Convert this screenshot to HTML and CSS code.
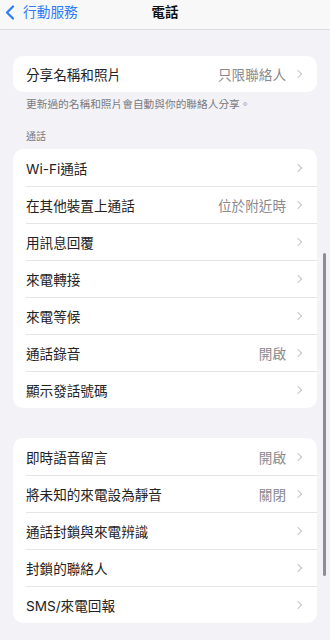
FILE: index.html
```html
<!DOCTYPE html>
<html lang="zh-Hant">
<head>
<meta charset="utf-8">
<title>電話</title>
<link rel="stylesheet" href="styles.css">
</head>
<body>
<div class="screen">
  <header class="nav">
    <div class="back">
      <svg class="back-icon" width="10" height="15" viewBox="0 0 10 15"><path d="M8 1.5 L2 7.5 L8 13.5" fill="none" stroke="#2f7cf6" stroke-width="2.2" stroke-linecap="round" stroke-linejoin="round"/></svg>
      <span>行動服務</span>
    </div>
    <div class="title">電話</div>
  </header>

  <main class="content">
    <section class="card first">
      <div class="row"><span class="label">分享名稱和照片</span><span class="value">只限聯絡人</span><span class="chev"></span></div>
    </section>
    <p class="footnote">更新過的名稱和照片會自動與你的聯絡人分享。</p>

    <h2 class="section-title">通話</h2>
    <section class="card">
      <div class="row"><span class="label">Wi-Fi通話</span><span class="value"></span><span class="chev"></span></div>
      <div class="row"><span class="label">在其他裝置上通話</span><span class="value">位於附近時</span><span class="chev"></span></div>
      <div class="row"><span class="label">用訊息回覆</span><span class="value"></span><span class="chev"></span></div>
      <div class="row"><span class="label">來電轉接</span><span class="value"></span><span class="chev"></span></div>
      <div class="row"><span class="label">來電等候</span><span class="value"></span><span class="chev"></span></div>
      <div class="row"><span class="label">通話錄音</span><span class="value">開啟</span><span class="chev"></span></div>
      <div class="row"><span class="label">顯示發話號碼</span><span class="value"></span><span class="chev"></span></div>
    </section>

    <section class="card gap">
      <div class="row"><span class="label">即時語音留言</span><span class="value">開啟</span><span class="chev"></span></div>
      <div class="row"><span class="label">將未知的來電設為靜音</span><span class="value">關閉</span><span class="chev"></span></div>
      <div class="row"><span class="label">通話封鎖與來電辨識</span><span class="value"></span><span class="chev"></span></div>
      <div class="row"><span class="label">封鎖的聯絡人</span><span class="value"></span><span class="chev"></span></div>
      <div class="row"><span class="label">SMS/來電回報</span><span class="value"></span><span class="chev"></span></div>
    </section>
  </main>
  <div class="scrollbar"></div>
</div>
</body>
</html>
```

FILE: styles.css
```css
* { box-sizing: border-box; }
html, body {
  margin: 0;
  padding: 0;
  background: #f2f2f7;
}
body {
  font-family: "Inter", "Noto Sans CJK TC", "Noto Sans", sans-serif;
  color: #1c1c1e;
}
.screen {
  position: relative;
  width: 330px;
  height: 640px;
  overflow: hidden;
  background: #f2f2f7;
}
.nav {
  position: relative;
  height: 30px;
  background: #f8f8f8;
  border-bottom: 1px solid #dcdcdf;
  display: flex;
  align-items: center;
  justify-content: center;
}
.back {
  position: absolute;
  left: 5px;
  top: 4px;
  display: flex;
  align-items: center;
  gap: 8px;
  color: #2f7cf6;
  font-size: 13.7px;
  line-height: 16px;
}
.back-icon { display: block; }
.title {
  font-size: 13.5px;
  font-weight: 700;
  line-height: 16px;
  margin-top: -6px;
  color: #111;
}
.content {
  padding: 0 13px;
}
.card {
  background: #fff;
  border-radius: 10px;
  overflow: hidden;
}
.card.first { margin-top: 26px; }
.card.first .row { height: 36px; }
.card.gap { margin-top: 30px; }
.row {
  position: relative;
  height: 37px;
  display: flex;
  align-items: center;
  padding: 0 13px 0 13px;
  font-size: 13.6px;
}
.row + .row::before {
  content: "";
  position: absolute;
  left: 13px;
  right: 0;
  top: 0;
  height: 1px;
  background: #e4e4e7;
}
.label { flex: 1; color: #222224; }
.value {
  color: #8a8a8e;
  margin-right: 9px;
}
.chev {
  width: 6px;
  height: 6px;
  border-top: 1.4px solid #c5c5c8;
  border-right: 1.4px solid #c5c5c8;
  transform: rotate(45deg);
  margin-right: 3px;
}
.footnote {
  margin: 0;
  padding: 6px 13px 0;
  font-size: 10.7px;
  line-height: 14px;
  color: #7a7a7f;
}
.section-title {
  margin: 17px 0 6px;
  padding: 0 13px;
  font-size: 10px;
  line-height: 14px;
  font-weight: 400;
  color: #7a7a7f;
}
.scrollbar {
  position: absolute;
  right: 4px;
  top: 253px;
  width: 3px;
  height: 323px;
  border-radius: 2px;
  background: #8e8e93;
}
```
